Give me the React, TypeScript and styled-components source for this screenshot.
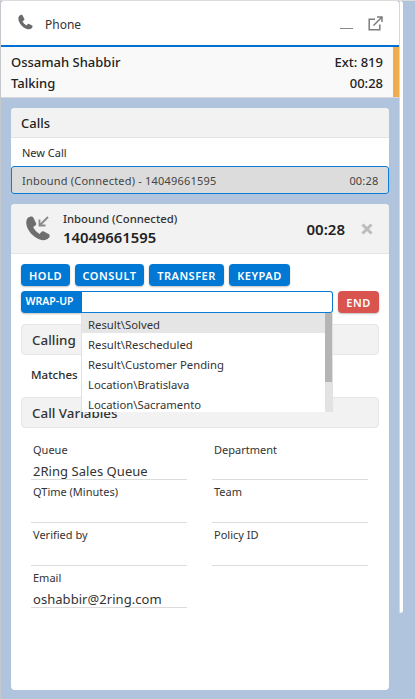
import React from "react";
import styled, { createGlobalStyle } from "styled-components";

const Global = createGlobalStyle`
  html, body { margin: 0; padding: 0; height: 100%; background: #b0c4de; overflow: hidden; }
  #root { height: 699px; }
  * { box-sizing: border-box; }
`;

const Page = styled.div`
  width: 415px; height: 699px; display: flex; align-items: flex-start;
  background: #b0c4de; border-top: 1px solid #dcdcdc; border-left: 1px solid #c4c8cc;
  font-family: "Noto Sans", "Open Sans", sans-serif; color: #2b2b2b; font-size: 12px;
`;
const Main = styled.div`
  width: 398px; height: 698px; display: flex; flex-direction: column; flex: none;
`;
const EdgeTrack = styled.div`
  width: 4px; height: 612px; flex: none; background: #fff;
  border-left: 1px solid #d8d8d8; border-bottom-right-radius: 3px; border-top-right-radius: 3px;
`;
const TitleBar = styled.header`
  height: 44px; flex: none; background: #fff; display: flex; align-items: center;
  padding: 0 16px 0 16px; border-top-left-radius: 3px; border-top-right-radius: 3px;
`;
const TitleText = styled.span`
  font-size: 12px; margin-left: 12px; padding-top: 2px; flex: 1; color: #333;
`;
const Minimize = styled.span`
  width: 13px; height: 1.5px; background: #8a8a8a; margin: 11px 15px 0 0;
`;
const BlueRule = styled.div`height: 2px; background: #0070d2; flex: none;`;
const Status = styled.section`
  height: 51px; flex: none; display: flex; background: #f9f9f9; border-bottom: 1px solid #d8d8d8;
`;
const StatusRows = styled.div`
  flex: 1; display: flex; flex-direction: column; justify-content: center; gap: 4px;
  padding: 2px 10px 0;
`;
const StatusRow = styled.div`
  display: flex; justify-content: space-between; font-size: 13px; font-weight: 500;
  line-height: 17px; color: #222;
`;
const OrangeBar = styled.div`width: 6px; background: #f0ad4e; flex: none;`;
const Body = styled.div`
  flex: 1; display: flex; flex-direction: column; gap: 10px; padding: 10px 10px 9px;
`;
const Card = styled.section`
  background: #fff; border-radius: 4px; display: flex; flex-direction: column; flex: none;
`;
const DetailCard = styled(Card)`flex: 1;`;
const CallsHeader = styled.div`
  height: 30px; background: #f2f2f2; border-bottom: 1px solid #e3e3e3; display: flex; align-items: center;
  padding: 0 10px; font-size: 13px; font-weight: 500; border-radius: 4px 4px 0 0; color: #222;
`;
const CallRow = styled.div<{ $active?: boolean }>`
  height: 28px; display: flex; align-items: center; justify-content: space-between;
  padding: 0 ${p => (p.$active ? 9.5 : 10)}px 0 ${p => (p.$active ? 10 : 11)}px; font-size: 11px;
  ${p => p.$active ? "background:#dcdcdc;border:1px solid #0a7bd6;border-radius:3px;color:#444;letter-spacing:.2px;" : ""}
`;
const DetailHeader = styled.div`
  height: 50px; flex: none; background: #f2f2f2; border-bottom: 1px solid #e3e3e3; border-radius: 4px 4px 0 0;
  display: flex; align-items: center; padding: 0 16px 0 13px;
`;
const CallInfo = styled.div`
  flex: 1; display: flex; flex-direction: column; margin-left: 12px; gap: 1px;
`;
const CallType = styled.span`font-size: 11.3px; font-weight: 500; line-height: 15px; color: #333;`;
const CallNumber = styled.span`font-size: 14.8px; font-weight: 600; line-height: 20px; color: #222;`;
const CallTimer = styled.span`font-size: 15px; font-weight: 600; margin-right: 16px; color: #222;`;
const Content = styled.div`
  flex: 1; display: flex; flex-direction: column; padding: 10px 10px 0;
`;
const ButtonRow = styled.div`display: flex; gap: 5px; height: 22px;`;
const ActionButton = styled.button<{ $w: number }>`
  width: ${p => p.$w}px; height: 22px; border: 0; padding: 0; border-radius: 4px; background: #0078d4; color: #fff;
  font: 600 11px "Noto Sans", sans-serif; letter-spacing: .5px; box-shadow: 0 1px 2px rgba(0,0,0,.25);
`;
const WrapRow = styled.div`
  position: relative; display: flex; height: 22px; margin-top: 5px;
`;
const WrapLabel = styled.div`
  width: 61px; background: #0078d4; color: #fff; font-size: 10.5px; font-weight: 600; border-radius: 4px 0 0 4px;
  display: flex; align-items: center; justify-content: center; padding: 0 4px 2px 0;
  box-shadow: 0 1px 2px rgba(0,0,0,.25);
`;
const WrapInput = styled.div`
  width: 251px; border: 1px solid #0a7bd6; border-left: 0; border-radius: 0 3px 3px 0; background: #fff;
`;
const EndButton = styled.button`
  width: 41px; margin-left: 5px; border: 0; padding: 0; border-radius: 4px; background: #d9534f; color: #fff;
  font: 600 11px "Noto Sans", sans-serif; letter-spacing: .5px; box-shadow: 0 1px 2px rgba(0,0,0,.25);
`;
const Dropdown = styled.div`
  position: absolute; top: 22px; left: 60px; width: 252px; height: 99px; background: #fff; z-index: 5;
  border: 1px solid #e2e2e2; border-top: 0; border-bottom: 0; display: flex; overflow: hidden;
`;
const OptionList = styled.div`flex: 1; overflow: hidden;`;
const Option = styled.div<{ $on?: boolean }>`
  height: 20px; padding: 1px 0 0 6px; font-size: 11.3px; line-height: 21px; white-space: nowrap; color: #333;
  background: ${p => (p.$on ? "#e5e5e5" : "#fff")};
`;
const Scroll = styled.div`width: 7px; background: #e3e3e3; flex: none;`;
const Thumb = styled.div`height: 69px; background: #b5b5b5;`;
const SectionHeader = styled.div`
  height: 31px; flex: none; background: #f2f2f2; border: 1px solid #e5e5e5; border-radius: 4px;
  display: flex; align-items: center; padding: 0 10px; font-size: 13.4px; font-weight: 500; color: #333;
`;
const CallingHeader = styled(SectionHeader)`margin-top: 11px;`;
const Matches = styled.div`
  height: 42px; display: flex; align-items: center; padding: 0 10px 3px; font-size: 11.5px; font-weight: 500;
`;
const Grid = styled.div`
  display: grid; grid-template-columns: 156px 156px; column-gap: 25px; padding: 9.5px 0 0 10px;
`;
const Field = styled.div`
  height: 42.7px; border-bottom: 1px solid #dcdcdc; display: flex; flex-direction: column; padding: 4px 0 0 2px;
`;
const FieldLabel = styled.span`font-size: 11px; line-height: 16px; color: #333;`;
const FieldValue = styled.span`font-size: 13px; line-height: 18px; margin-top: 4px; letter-spacing: .05px; color: #333;`;

const handsetPath = "M3.6 2.6C5 1.3 7.3.8 8.2 1.8l2.7 5.4c.5 1 .1 2-.8 2.6L8.3 11c1.2 2.7 3.3 4.9 5.9 6.2l1.3-1.6c.7-.8 1.7-1 2.6-.6l4.6 2.4c1 .6.9 2.6-.3 3.6-2 2-5 2.5-8.6 1C8.5 20 4.2 15.3 2.5 10 1.6 7 2 4.2 3.6 2.6Z";

const PhoneGlyph = styled.span`display: flex; width: 16px; height: 16px; margin-top: -3px;`;
const CallGlyph = styled.span`display: flex; width: 27px; height: 27px; flex: none;`;

const options = ["Result\\Solved", "Result\\Rescheduled", "Result\\Customer Pending", "Location\\Bratislava", "Location\\Sacramento"];
const fields: [string, string][] = [
  ["Queue", "2Ring Sales Queue"], ["Department", ""],
  ["QTime (Minutes)", ""], ["Team", ""],
  ["Verified by", ""], ["Policy ID", ""],
  ["Email", "oshabbir@2ring.com"],
];
const buttons: [string, number][] = [["HOLD", 49], ["CONSULT", 69], ["TRANSFER", 75], ["KEYPAD", 61]];

export default function App() {
  return (
    <Page>
      <Global />
      <Main>
        <TitleBar>
          <PhoneGlyph>
            <svg width="16" height="16" viewBox="0 0 24 24" fill="#6b6b6b"><path d={handsetPath} /></svg>
          </PhoneGlyph>
          <TitleText>Phone</TitleText>
          <Minimize />
          <svg width="15" height="15" viewBox="0 0 15 15" fill="none" stroke="#7d7d7d" strokeWidth="1.5">
            <path d="M7 3.2H1.2v10.6h10.6V8.5" />
            <path d="M5.5 9.5 13.5 1.5M9 1h5v5" />
          </svg>
        </TitleBar>
        <BlueRule />
        <Status>
          <StatusRows>
            <StatusRow><span>Ossamah Shabbir</span><span>Ext: 819</span></StatusRow>
            <StatusRow><span>Talking</span><span>00:28</span></StatusRow>
          </StatusRows>
          <OrangeBar />
        </Status>
        <Body>
          <Card>
            <CallsHeader>Calls</CallsHeader>
            <CallRow>New Call</CallRow>
            <CallRow $active><span>Inbound (Connected) - 14049661595</span><span>00:28</span></CallRow>
          </Card>
          <DetailCard>
            <DetailHeader>
              <CallGlyph>
                <svg width="27" height="27" viewBox="0 0 27 27" fill="none">
                  <g transform="scale(1.1)"><path fill="#6e6e6e" d={handsetPath} /></g>
                  <path d="M24 2 15.5 10.5M15.5 4.5v6h6" stroke="#8a8a8a" strokeWidth="1.8" />
                </svg>
              </CallGlyph>
              <CallInfo>
                <CallType>Inbound (Connected)</CallType>
                <CallNumber>14049661595</CallNumber>
              </CallInfo>
              <CallTimer>00:28</CallTimer>
              <svg width="12" height="12" viewBox="0 0 12 12" stroke="#bdbdbd" strokeWidth="3">
                <path d="M1.5 1.5l9 9M10.5 1.5l-9 9" />
              </svg>
            </DetailHeader>
            <Content>
              <ButtonRow>
                {buttons.map(([t, w]) => <ActionButton key={t} $w={w}>{t}</ActionButton>)}
              </ButtonRow>
              <WrapRow>
                <WrapLabel>WRAP-UP</WrapLabel>
                <WrapInput />
                <EndButton>END</EndButton>
                <Dropdown>
                  <OptionList>
                    {options.map((o, i) => <Option key={o} $on={i === 0}>{o}</Option>)}
                  </OptionList>
                  <Scroll><Thumb /></Scroll>
                </Dropdown>
              </WrapRow>
              <CallingHeader>Calling</CallingHeader>
              <Matches>Matches</Matches>
              <SectionHeader>Call Variables</SectionHeader>
              <Grid>
                {fields.map(([l, v]) => (
                  <Field key={l}>
                    <FieldLabel>{l}</FieldLabel>
                    {v && <FieldValue>{v}</FieldValue>}
                  </Field>
                ))}
              </Grid>
            </Content>
          </DetailCard>
        </Body>
      </Main>
      <EdgeTrack />
    </Page>
  );
}
